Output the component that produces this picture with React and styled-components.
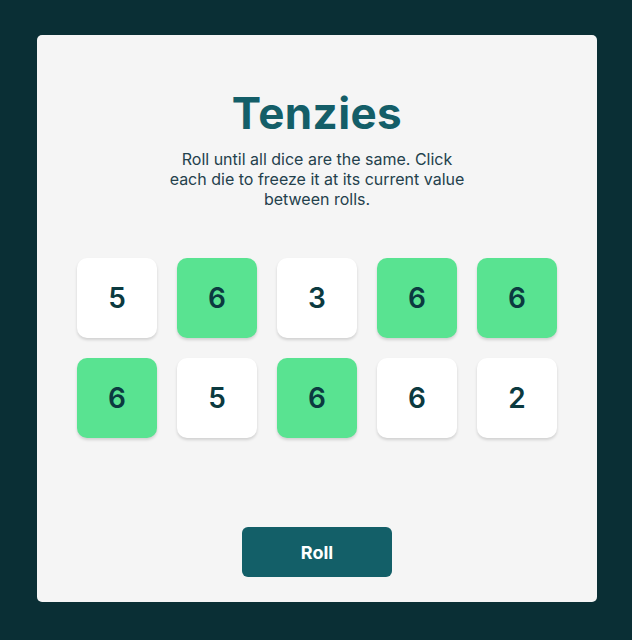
import React from 'react';
import styled, { createGlobalStyle } from 'styled-components';

const GlobalStyle = createGlobalStyle`
  html, body {
    margin: 0;
    padding: 0;
    background: #0a2f35;
  }
  body {
    font-family: Inter, "Noto Sans", sans-serif;
  }
`;

const Page = styled.div`
  width: 632px;
  height: 640px;
  padding: 35px 35px 38px 37px;
  box-sizing: border-box;
`;

const Board = styled.main`
  width: 560px;
  height: 567px;
  background: #f5f5f5;
  border-radius: 5px;
  box-sizing: border-box;
  padding: 53px 40px 25px;
  display: flex;
  flex-direction: column;
  align-items: center;
`;

const Title = styled.h1`
  margin: 0;
  font-size: 44px;
  line-height: 50px;
  font-weight: 700;
  letter-spacing: 0.4px;
  color: #145e68;
`;

const Instructions = styled.p`
  margin: 11px 0 0;
  width: 300px;
  text-align: center;
  font-size: 16px;
  line-height: 20px;
  color: #24414c;
`;

const DiceGrid = styled.div`
  margin-top: 49px;
  display: grid;
  grid-template-columns: repeat(5, 80px);
  grid-auto-rows: 80px;
  gap: 20px;
`;

const Die = styled.button`
  border: none;
  border-radius: 10px;
  background: ${({ held }) => (held ? '#59e391' : '#ffffff')};
  box-shadow: 0 2px 3px rgba(0, 0, 0, 0.15);
  font-family: Inter, "Noto Sans", sans-serif;
  font-size: 28px;
  font-weight: 600;
  color: #0b3a40;
  cursor: pointer;
  padding: 0;
`;

const RollButton = styled.button`
  margin-top: auto;
  width: 150px;
  height: 50px;
  border: none;
  border-radius: 6px;
  background: #135f68;
  color: #ffffff;
  font-family: Inter, "Noto Sans", sans-serif;
  font-size: 18px;
  font-weight: 700;
  cursor: pointer;
`;

const dice = [
  { id: 1, value: 5, held: false },
  { id: 2, value: 6, held: true },
  { id: 3, value: 3, held: false },
  { id: 4, value: 6, held: true },
  { id: 5, value: 6, held: true },
  { id: 6, value: 6, held: true },
  { id: 7, value: 5, held: false },
  { id: 8, value: 6, held: true },
  { id: 9, value: 6, held: false },
  { id: 10, value: 2, held: false },
];

export default function App() {
  return (
    <>
      <GlobalStyle />
      <Page>
        <Board>
          <Title>Tenzies</Title>
          <Instructions>
            Roll until all dice are the same. Click each die to freeze it at its current value
            between rolls.
          </Instructions>
          <DiceGrid>
            {dice.map((die) => (
              <Die key={die.id} held={die.held}>
                {die.value}
              </Die>
            ))}
          </DiceGrid>
          <RollButton>Roll</RollButton>
        </Board>
      </Page>
    </>
  );
}
